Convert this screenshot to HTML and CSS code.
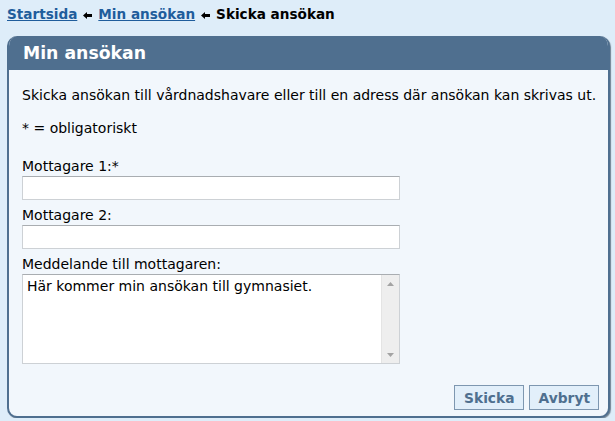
FILE: index.html
```html
<!DOCTYPE html>
<html lang="sv">
<head>
    <meta charset="UTF-8">
    <meta name="viewport" content="width=device-width, initial-scale=1.0">
    <title>Skicka ansökan</title>
    <link rel="stylesheet" href="styles.css">
</head>
<body>
<!-- Breadcrumb trail -->
<div class="crumbs">
    <a href="#">Startsida</a>
    <svg class="crumb-arrow" width="9" height="7" viewBox="0 0 9 7"><polygon points="0,3.5 4,0 4,2 9,2 9,5 4,5 4,7" fill="#000"/></svg>
    <a href="#">Min ansökan</a>
    <svg class="crumb-arrow" width="9" height="7" viewBox="0 0 9 7"><polygon points="0,3.5 4,0 4,2 9,2 9,5 4,5 4,7" fill="#000"/></svg>
    <span class="current">Skicka ansökan</span>
</div>

<div class="panel">
    <h2 class="panel-title">Min ansökan</h2>
    <form class="panel-body">
        <p class="intro">Skicka ansökan till vårdnadshavare eller till en adress där ansökan kan skrivas ut.</p>
        <p class="required-note">* = obligatoriskt</p>

        <label for="rcpt1">Mottagare 1:*</label>
        <input type="text" id="rcpt1" class="field">

        <label for="rcpt2">Mottagare 2:</label>
        <input type="text" id="rcpt2" class="field">

        <label for="message">Meddelande till mottagaren:</label>
        <!-- textarea with a drawn scrollbar (the browser hides its own) -->
        <div class="message-box">
            <textarea id="message" class="message">Här kommer min ansökan till gymnasiet.</textarea>
            <div class="scrollbar">
                <svg width="7" height="4" viewBox="0 0 7 4"><polygon points="0,4 3.5,0 7,4" fill="#a3a3a3"/></svg>
                <svg width="7" height="4" viewBox="0 0 7 4"><polygon points="0,0 7,0 3.5,4" fill="#a3a3a3"/></svg>
            </div>
        </div>

        <div class="actions">
            <button type="button" class="btn">Skicka</button>
            <button type="button" class="btn">Avbryt</button>
        </div>
    </form>
</div>
</body>
</html>
```

FILE: styles.css
```css
body {
    font-family: "DejaVu Sans", Verdana, sans-serif;
    font-size: 14px;
    margin: 0;
    padding: 6px 5px 0 7px;
    background-color: #deedf9;
    color: #000;
}

.crumbs {
    font-weight: bold;
    font-size: 13.6px;
    line-height: 16px;
    height: 30px;
    display: flex;
    align-items: flex-start;
    gap: 6px;
}

.crumbs a {
    color: #1f5d9c;
}

.crumb-arrow {
    margin-top: 6px;
}

.panel {
    background: #f2f7fc;
    border: 2px solid #4f6f8f;
    border-top: none;
    border-radius: 10px;
    box-shadow: 1px 1px 1px rgba(40, 60, 80, 0.6);
    overflow: hidden;
    width: 599px;
}

.panel-title {
    margin: 0;
    background: #4f6f8f;
    color: #fff;
    font-size: 17.3px;
    height: 34px;
    line-height: 34px;
    padding-left: 14px;
}

.panel-body {
    display: flex;
    flex-direction: column;
    align-items: flex-start;
    padding: 17px 9px 6px 13px;
}

.panel-body p {
    margin: 0;
    line-height: 16px;
}

.required-note {
    margin-top: 17px !important;
    margin-bottom: 22px !important;
}

.panel-body label {
    line-height: 16px;
    margin-bottom: 2px;
}

.field {
    box-sizing: border-box;
    width: 378px;
    height: 24px;
    margin: 0 0 7px 0;
    border: 1px solid #cdd1d5;
    border-top-color: #a9adb1;
    background: #fff;
    font-family: inherit;
    font-size: 14px;
}

.message-box {
    box-sizing: border-box;
    width: 378px;
    height: 90px;
    display: flex;
    border: 1px solid #cdd1d5;
    border-top-color: #a9adb1;
    background: #fff;
}

.message {
    flex: 1;
    border: none;
    outline: none;
    resize: none;
    overflow: hidden;
    margin: 0;
    padding: 3px 4px;
    font-family: inherit;
    font-size: 14px;
    line-height: 16px;
    background: transparent;
}

.scrollbar {
    width: 17px;
    background: #eeeeee;
    border-left: 1px solid #e4e4e4;
    display: flex;
    flex-direction: column;
    justify-content: space-between;
    align-items: center;
    padding: 7px 0 6px;
}

.actions {
    align-self: flex-end;
    display: flex;
    gap: 5px;
    margin-top: 21px;
}

.btn {
    height: 25px;
    margin: 0;
    padding: 0 8px 0 9px;
    background: #e2effa;
    border: 1px solid #7e97b0;
    color: #4f6f8f;
    font-family: inherit;
    font-size: 13.8px;
    font-weight: bold;
    cursor: pointer;
}
```
